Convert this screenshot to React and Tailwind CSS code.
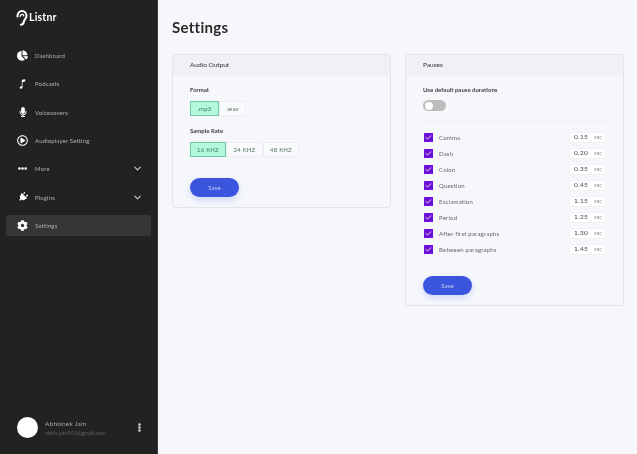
import React from "react";
import { ChevronDown, Check } from "lucide-react";
import { FaChartPie, FaMicrophone, FaRegPlayCircle, FaEllipsisH, FaPlug, FaCog, FaEllipsisV } from "react-icons/fa";
import { IoMusicalNote } from "react-icons/io5";

const nav = [
  ["Dashboard", FaChartPie, "text-[11px]"],
  ["Podcasts", IoMusicalNote, "text-[12px]"],
  ["Voicesovers", FaMicrophone, "text-[10px]"],
  ["Audioplayer Setting", FaRegPlayCircle, "text-[11px]"],
  ["More", FaEllipsisH, "text-[9px]", true],
  ["Plugins", FaPlug, "text-[10px] rotate-45", true],
  ["Settings", FaCog, "text-[11px]"],
];

const pauses = [
  ["Comma", "0.15"],
  ["Dash", "0.20"],
  ["Colon", "0.35"],
  ["Question", "0.45"],
  ["Exclamation", "1.15"],
  ["Period", "1.25"],
  ["After first paragraphs", "1.30"],
  ["Between paragraphs", "1.45"],
];

function Segment({ items }) {
  return (
    <div className="flex">
      {items.map(([label, w], i) => (
        <div
          key={label}
          className={`${w} h-[15px] flex items-center justify-center text-[6px] tracking-[0.2px] border ${
            i === 0
              ? "bg-[#b4f8dc] border-[#6fc9a5] text-[#3c7a63]"
              : "bg-[#f8fafc] border-[#eceef2] text-[#56706a]"
          }`}
        >
          {label}
        </div>
      ))}
    </div>
  );
}

function SaveButton() {
  return (
    <button className="w-[49px] h-[19px] rounded-full bg-[#3b55de] text-[#c5cdf5] text-[6px] shadow-[0_3px_6px_rgba(59,85,222,0.2)]">
      Save
    </button>
  );
}

function Card({ title, className, children }) {
  return (
    <section className={`w-[219px] rounded-[3px] border border-[#e3e5ea] bg-[#f5f7fb] overflow-hidden ${className}`}>
      <header className="h-[21px] bg-[#f0f1f4] pl-[17px] pb-[1px] flex items-center text-[6.5px] text-[#333]">{title}</header>
      {children}
    </section>
  );
}

export default function App() {
  return (
    <div className="flex h-[454px] w-[637px] overflow-hidden bg-[#f5f7fb] font-['Lato',sans-serif] blur-[0.45px]">
      <aside className="w-[158px] shrink-0 bg-[#222222] border-r border-[#3a3a3a] flex flex-col">
        <div className="h-[36px] pl-[16px] flex items-center gap-[1px] text-white">
          <svg width="12" height="16" viewBox="0 0 12 16" fill="none" stroke="white" strokeWidth="2" strokeLinecap="round">
            <path d="M1.5 6.5C1.5 3 3.6 1 6 1s4.5 2 4.5 5c0 2.5-2.2 3.2-2.6 5.5-.3 2-1.3 3.2-3 3.2" />
            <path d="M4.3 6.5c0-1.3.7-2.2 1.8-2.2 1 0 1.7.7 1.7 1.7" strokeWidth="1.2" />
          </svg>
          <span className="text-[10.5px] font-bold tracking-[0.2px]">Listnr</span>
        </div>
        <nav className="mt-[9px] flex flex-col gap-[7.33px] px-[6px]">
          {nav.map(([label, Icon, iconClass, chevron]) => (
            <div
              key={label}
              className={`h-[21px] rounded-[2px] flex items-center pl-[11px] pr-[8px] ${
                label === "Settings" ? "bg-[#363636]" : ""
              }`}
            >
              <span className="w-[11px] flex justify-center text-white">
                <Icon className={iconClass} />
              </span>
              <span className="ml-[7px] text-[6px] text-[#b0b0b0] tracking-[0.15px]">{label}</span>
              {chevron && <ChevronDown size={11} strokeWidth={2.2} className="ml-auto text-[#d0d0d0]" />}
            </div>
          ))}
        </nav>
        <div className="mt-auto h-[37px] pl-[17px] pr-[13px] flex items-start">
          <div className="w-[21px] h-[21px] rounded-full bg-white" />
          <div className="ml-[7px] mt-[3px] flex flex-col gap-[2px]">
            <span className="text-[6.5px] leading-[8px] text-[#a8a8a8] tracking-[0.2px]">Abhishek Jain</span>
            <span className="text-[5.5px] leading-[7px] text-[#5f5f5f]">abhis.jain393@gmail.com</span>
          </div>
          <span className="ml-auto mt-[6px] text-[#d6d6d6]">
            <FaEllipsisV className="text-[9px]" />
          </span>
        </div>
      </aside>
      <main className="flex-1 pl-[14px] pt-[18px]">
        <h1 className="text-[15px] leading-[18px] font-bold text-[#2a2a2a] tracking-[0.3px]">Settings</h1>
        <div className="mt-[18px] flex items-start gap-[14px]">
          <Card title="Audio Output" className="h-[154px]">
            <div className="pl-[17px] pt-[10px]">
              <div className="text-[6px] leading-[8px] font-bold text-[#444]">Format</div>
              <div className="mt-[7px]">
                <Segment items={[[".mp3", "w-[29px]"], [".wav", "w-[27px]"]]} />
              </div>
              <div className="mt-[11px] text-[6px] leading-[8px] font-bold text-[#444]">Sample Rate</div>
              <div className="mt-[7px]">
                <Segment items={[["16 KHZ", "w-[36px]"], ["24 KHZ", "w-[37px]"], ["48 KHZ", "w-[36px]"]]} />
              </div>
              <div className="mt-[15px]">
                <SaveButton />
              </div>
            </div>
          </Card>
          <Card title="Pauses" className="h-[252px]">
            <div className="px-[17px] pt-[10px]">
              <div className="text-[6px] leading-[8px] font-bold text-[#444]">Use default pause durations</div>
              <div className="mt-[6px] w-[23px] h-[11px] rounded-full bg-[#bdbdbd] flex items-center pl-[2px]">
                <div className="w-[8px] h-[8px] rounded-full bg-white" />
              </div>
              <div className="mt-[10px] border-t border-[#ebedf0]" />
              <div className="mt-[7px] flex flex-col">
                {pauses.map(([label, value]) => (
                  <div key={label} className="h-[16px] flex items-center">
                    <span className="w-[9px] h-[9px] bg-[#6a11d8] flex items-center justify-center ml-[1px]">
                      <Check size={7} strokeWidth={3} className="text-white" />
                    </span>
                    <span className="ml-[6px] text-[6px] text-[#666] tracking-[0.2px]">{label}</span>
                    <div className="ml-auto w-[37px] h-[11px] bg-white flex items-center justify-end pr-[3px] border border-[#f0f1f4]">
                      <span className="text-[6.5px] text-[#444] tracking-[0.3px]">{value}</span>
                      <span className="ml-[6px] text-[5.5px] text-[#999]">sec</span>
                    </div>
                  </div>
                ))}
              </div>
              <div className="mt-[13px]">
                <SaveButton />
              </div>
            </div>
          </Card>
        </div>
      </main>
    </div>
  );
}
